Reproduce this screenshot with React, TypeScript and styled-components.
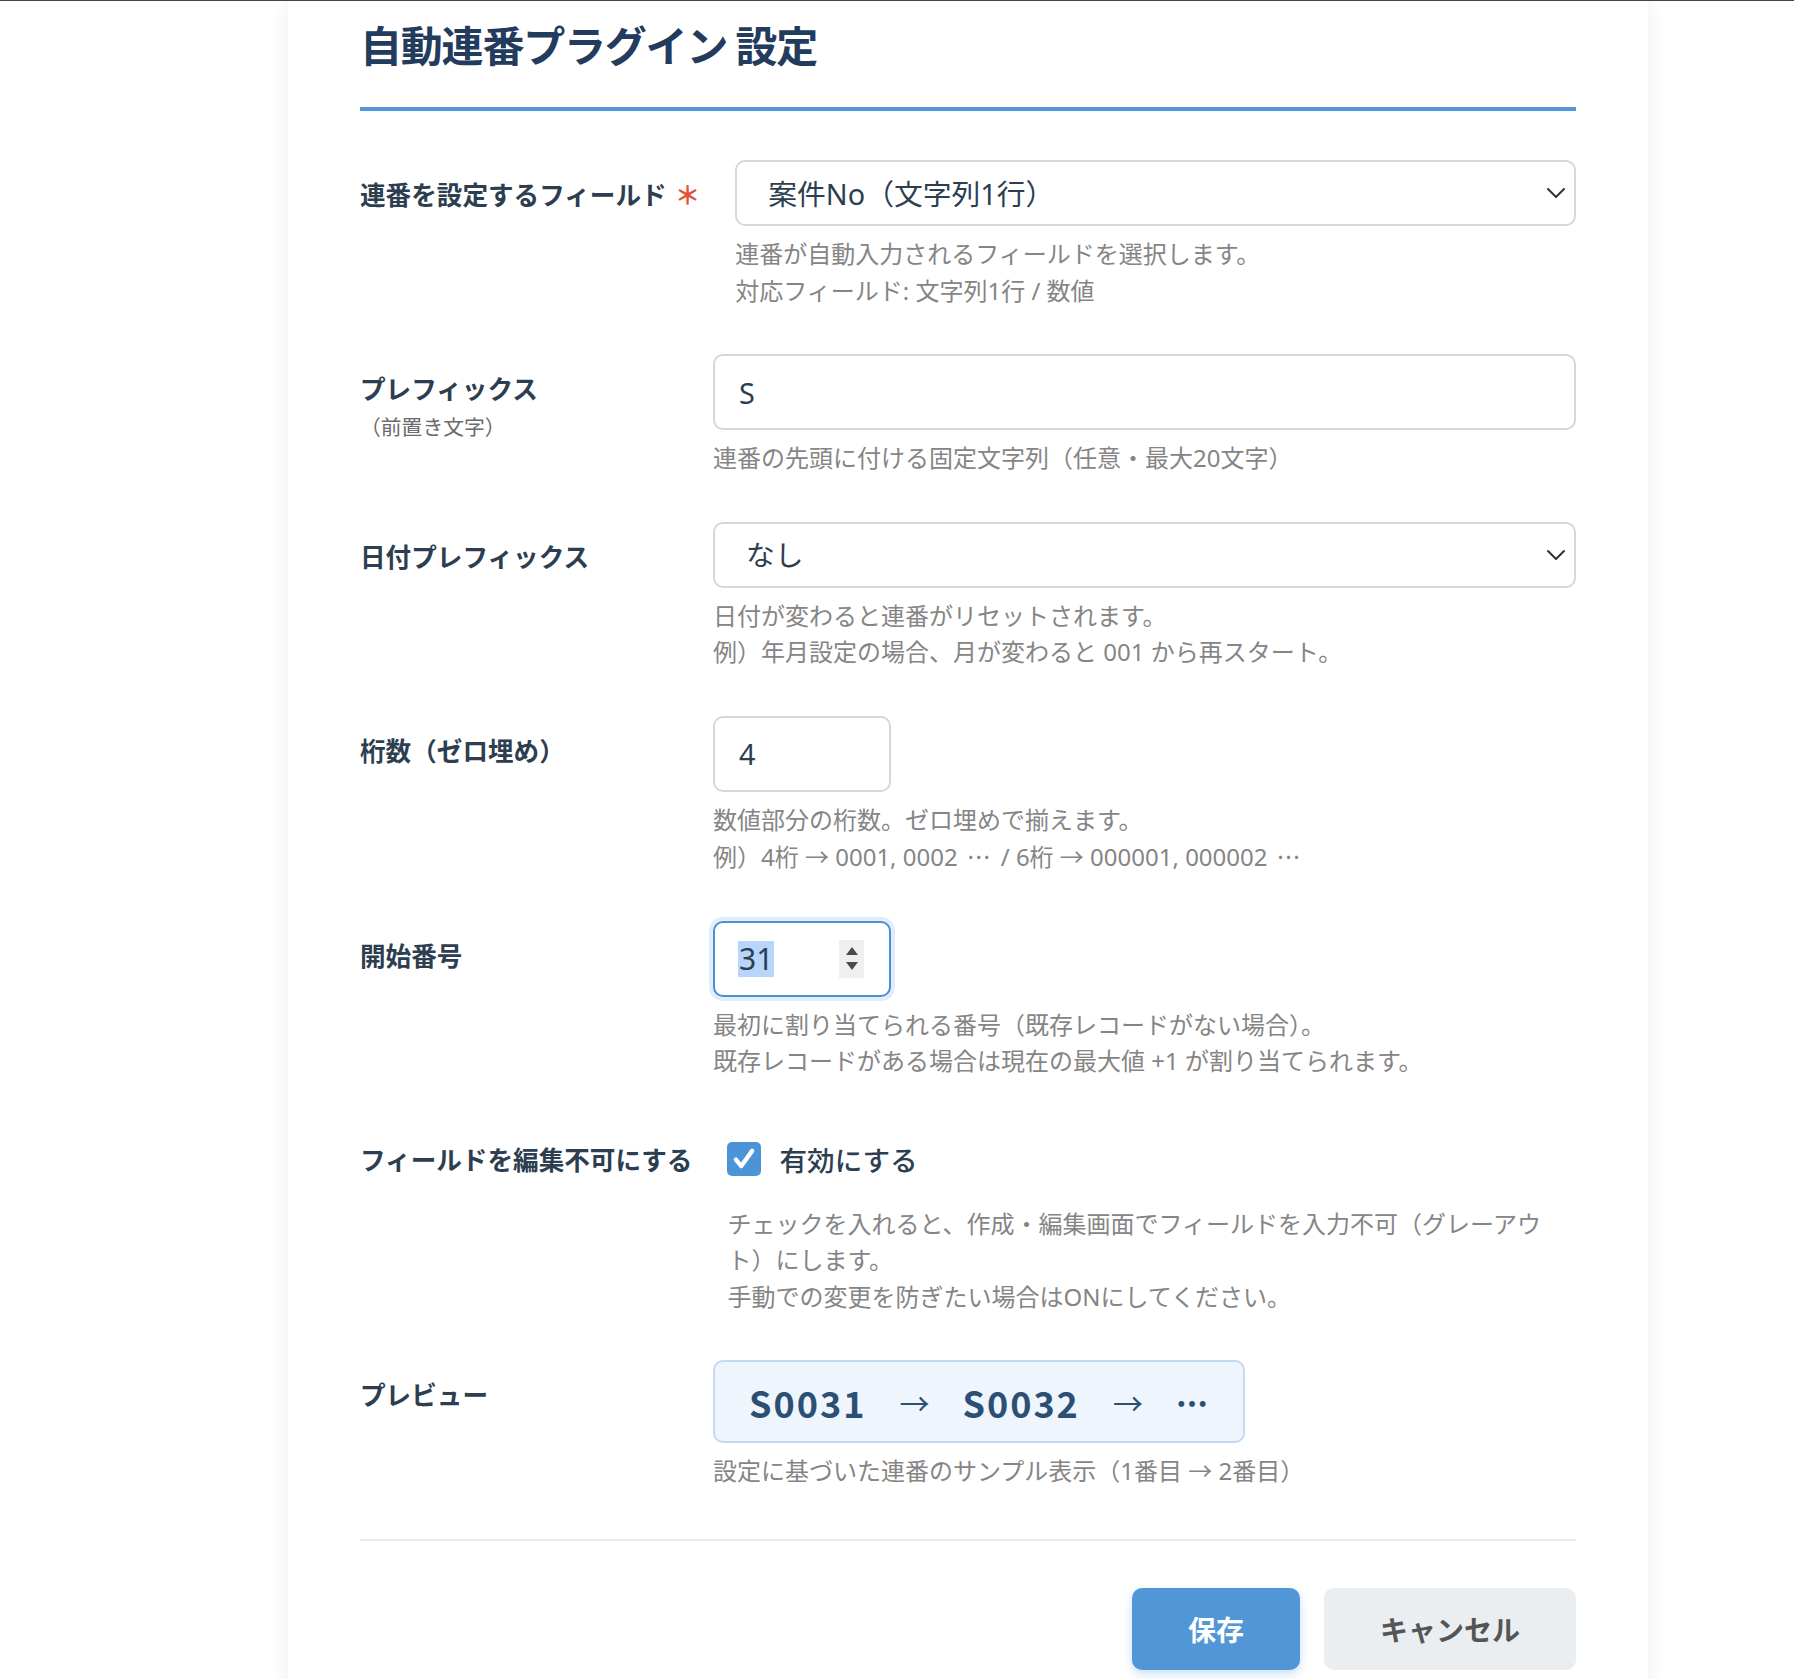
import React from 'react';
import styled, { createGlobalStyle } from 'styled-components';

const CJK = '"Noto Sans CJK JP", "Noto Sans", sans-serif';
const MIXED = '"Noto Sans", "Noto Sans CJK JP", sans-serif';

const GlobalStyle = createGlobalStyle`
  html, body {
    margin: 0;
    padding: 0;
    background: #ffffff;
  }
  body {
    font-family: ${CJK};
    color: #2c3e50;
  }
  * {
    box-sizing: border-box;
  }
`;

const Page = styled.div`
  min-height: 1679px;
  border-top: 1px solid #444;
  padding-left: 288px;
  overflow: hidden;
`;

const Card = styled.div`
  width: 1360px;
  min-height: 1720px;
  background: #ffffff;
  padding: 18px 72px 40px;
  box-shadow: 0 0 22px rgba(0, 0, 0, 0.07);
`;

const Title = styled.h1`
  margin: 0 0 49px;
  padding-bottom: 38px;
  border-bottom: 4px solid #5098d8;
  font-size: 42px;
  line-height: 1.2;
  font-weight: 700;
  letter-spacing: -1.2px;
  color: #233b5d;
`;

const Form = styled.div`
  display: flex;
  flex-direction: column;
  gap: 45px;
`;

const Row = styled.div`
  display: flex;
  align-items: flex-start;
  gap: 35px;
`;

const LabelCol = styled.div`
  flex: 0 0 auto;
  min-width: 318px;
  padding-top: 15px;
`;

const Label = styled.div`
  font-size: 25.6px;
  line-height: 38px;
  font-weight: 700;
  color: #2c3e50;
  white-space: nowrap;
`;

const Required = styled.span`
  color: #e0533b;
  margin-left: 8px;
  font-size: 25.6px;
  font-weight: 700;
`;

const SubLabel = styled.div`
  margin-top: 4px;
  font-size: 20.8px;
  line-height: 30px;
  color: #6b6b6b;
`;

const FieldCol = styled.div`
  flex: 1;
  min-width: 0;
`;

const SelectWrap = styled.div`
  position: relative;
`;

const Select = styled.select`
  display: block;
  width: 100%;
  height: 66px;
  appearance: none;
  border: 2px solid #d3d8de;
  border-radius: 10px;
  background: #ffffff;
  padding: 0 56px 0 31px;
  font-family: ${MIXED};
  font-size: 28.8px;
  color: #2c3e50;
  outline: none;
`;

const Chevron = styled.svg`
  position: absolute;
  right: 10px;
  top: 50%;
  transform: translateY(-50%);
  pointer-events: none;
`;

const TextInput = styled.input<{ $width?: number }>`
  display: block;
  width: ${({ $width }) => ($width ? `${$width}px` : '100%')};
  height: 76px;
  border: 2px solid #d3d8de;
  border-radius: 10px;
  background: #ffffff;
  padding: 0 20px 0 24px;
  font-family: ${MIXED};
  font-size: 28.8px;
  color: #2c3e50;
  outline: none;
`;

const NumberBox = styled.div`
  width: 178px;
  height: 76px;
  display: flex;
  align-items: center;
  justify-content: space-between;
  padding: 0 25px 0 23px;
  border: 2px solid #4a90d9;
  border-radius: 10px;
  box-shadow: 0 0 0 4px rgba(74, 144, 217, 0.16);
  background: #ffffff;
`;

const SelectedText = styled.span`
  background: #b8d6fb;
  padding: 0 1px;
  font-family: ${MIXED};
  font-size: 30px;
  line-height: 36px;
  color: #2c3e50;
`;

const Spinner = styled.div`
  width: 25px;
  height: 38px;
  display: flex;
  flex-direction: column;
  align-items: center;
  justify-content: center;
  gap: 7px;
  background: #efefef;
`;

const Help = styled.div`
  margin-top: 10px;
  font-family: ${MIXED};
  font-size: 24px;
  line-height: 36.5px;
  color: #858585;
`;

const Ell = styled.span`
  font-family: ${CJK};
  margin: 0 9px;
  letter-spacing: 1px;
`;

const CheckRow = styled.label`
  display: flex;
  align-items: center;
  gap: 18px;
  height: 68px;
`;

const CheckBox = styled.span`
  width: 34px;
  height: 34px;
  border-radius: 5px;
  background: #4d93d8;
  display: flex;
  align-items: center;
  justify-content: center;
`;

const CheckText = styled.span`
  font-size: 27.6px;
  font-weight: 500;
  color: #2c3e50;
`;

const CheckHelp = styled(Help)`
  margin-top: 13px;
  padding-right: 30px;
`;

const PreviewBox = styled.div`
  width: 532px;
  height: 83px;
  display: flex;
  align-items: center;
  gap: 33px;
  padding: 0 30px 0 34px;
  border: 2px solid #c3daf1;
  border-radius: 10px;
  background: #eef5fc;
  color: #2b4f75;
`;

const Code = styled.span`
  font-size: 36px;
  font-weight: 700;
  letter-spacing: 2px;
`;

const Arrow = styled.span`
  font-size: 30px;
  font-weight: 400;
`;

const Dots = styled.span`
  font-size: 32px;
  font-weight: 900;
  letter-spacing: -1px;
`;

const Divider = styled.hr`
  margin: 49px 0 0;
  border: none;
  border-top: 2px solid #e6eded;
`;

const ButtonRow = styled.div`
  display: flex;
  justify-content: flex-end;
  gap: 24px;
  margin-top: 47px;
`;

const Button = styled.button<{ $primary?: boolean }>`
  height: 82px;
  padding: 0 56px;
  border: none;
  border-radius: 10px;
  font-family: inherit;
  font-size: 28px;
  font-weight: 700;
  cursor: pointer;
  background: ${({ $primary }) => ($primary ? '#5197d7' : '#ebeef0')};
  color: ${({ $primary }) => ($primary ? '#ffffff' : '#555555')};
  box-shadow: ${({ $primary }) => ($primary ? '0 4px 10px rgba(81, 151, 215, 0.3)' : 'none')};
`;

const ChevronIcon = () => (
  <Chevron width="20" height="12" viewBox="0 0 20 12">
    <path d="M2 2 L10 10 L18 2" fill="none" stroke="#333" strokeWidth="2" strokeLinecap="round" strokeLinejoin="round" />
  </Chevron>
);

const App = () => {
  return (
    <>
      <GlobalStyle />
      <Page>
        <Card>
          <Title>自動連番プラグイン 設定</Title>

          <Form>
            <Row>
              <LabelCol>
                <Label>
                  連番を設定するフィールド<Required>＊</Required>
                </Label>
              </LabelCol>
              <FieldCol>
                <SelectWrap>
                  <Select defaultValue="case">
                    <option value="case">案件No（文字列1行）</option>
                  </Select>
                  <ChevronIcon />
                </SelectWrap>
                <Help>
                  連番が自動入力されるフィールドを選択します。
                  <br />
                  対応フィールド: 文字列1行 / 数値
                </Help>
              </FieldCol>
            </Row>

            <Row>
              <LabelCol>
                <Label>プレフィックス</Label>
                <SubLabel>（前置き文字）</SubLabel>
              </LabelCol>
              <FieldCol>
                <TextInput type="text" defaultValue="S" />
                <Help>連番の先頭に付ける固定文字列（任意・最大20文字）</Help>
              </FieldCol>
            </Row>

            <Row>
              <LabelCol>
                <Label>日付プレフィックス</Label>
              </LabelCol>
              <FieldCol>
                <SelectWrap>
                  <Select defaultValue="none">
                    <option value="none">なし</option>
                  </Select>
                  <ChevronIcon />
                </SelectWrap>
                <Help>
                  日付が変わると連番がリセットされます。
                  <br />
                  例）年月設定の場合、月が変わると 001 から再スタート。
                </Help>
              </FieldCol>
            </Row>

            <Row>
              <LabelCol>
                <Label>桁数（ゼロ埋め）</Label>
              </LabelCol>
              <FieldCol>
                <TextInput type="text" defaultValue="4" $width={178} />
                <Help>
                  数値部分の桁数。ゼロ埋めで揃えます。
                  <br />
                  例）4桁 → 0001, 0002<Ell>…</Ell>/ 6桁 → 000001, 000002<Ell>…</Ell>
                </Help>
              </FieldCol>
            </Row>

            <Row>
              <LabelCol>
                <Label>開始番号</Label>
              </LabelCol>
              <FieldCol>
                <NumberBox>
                  <SelectedText>31</SelectedText>
                  <Spinner>
                    <svg width="12" height="8" viewBox="0 0 12 8">
                      <path d="M6 0 L12 8 L0 8 Z" fill="#4a4a4a" />
                    </svg>
                    <svg width="12" height="8" viewBox="0 0 12 8">
                      <path d="M0 0 L12 0 L6 8 Z" fill="#4a4a4a" />
                    </svg>
                  </Spinner>
                </NumberBox>
                <Help>
                  最初に割り当てられる番号（既存レコードがない場合）。
                  <br />
                  既存レコードがある場合は現在の最大値 +1 が割り当てられます。
                </Help>
              </FieldCol>
            </Row>

            <Row>
              <LabelCol>
                <Label>フィールドを編集不可にする</Label>
              </LabelCol>
              <FieldCol>
                <CheckRow>
                  <CheckBox>
                    <svg width="26" height="26" viewBox="0 0 24 24">
                      <path d="M4.5 12.5 L9.5 18.5 L19.5 4.5" fill="none" stroke="#fff" strokeWidth="4" strokeLinecap="round" strokeLinejoin="round" />
                    </svg>
                  </CheckBox>
                  <CheckText>有効にする</CheckText>
                </CheckRow>
                <CheckHelp>
                  チェックを入れると、作成・編集画面でフィールドを入力不可（グレーアウト）にします。
                  <br />
                  手動での変更を防ぎたい場合はONにしてください。
                </CheckHelp>
              </FieldCol>
            </Row>

            <Row>
              <LabelCol>
                <Label>プレビュー</Label>
              </LabelCol>
              <FieldCol>
                <PreviewBox>
                  <Code>S0031</Code>
                  <Arrow>→</Arrow>
                  <Code>S0032</Code>
                  <Arrow>→</Arrow>
                  <Dots>…</Dots>
                </PreviewBox>
                <Help>設定に基づいた連番のサンプル表示（1番目 → 2番目）</Help>
              </FieldCol>
            </Row>
          </Form>

          <Divider />

          <ButtonRow>
            <Button $primary>保存</Button>
            <Button>キャンセル</Button>
          </ButtonRow>
        </Card>
      </Page>
    </>
  );
};

export default App;
